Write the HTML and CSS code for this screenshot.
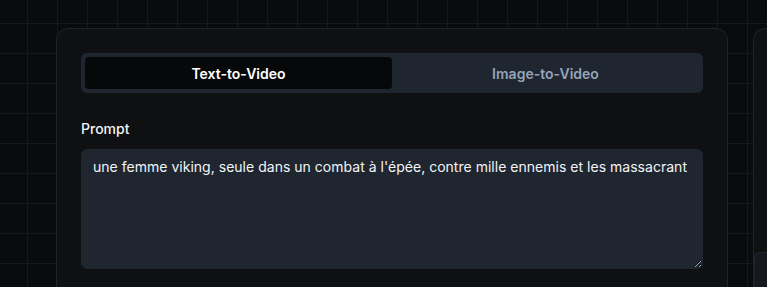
FILE: index.html
```html
<!DOCTYPE html>
<html lang="fr">
<head>
<meta charset="utf-8">
<title>Text-to-Video</title>
<link rel="stylesheet" href="styles.css">
</head>
<body>
<div class="page">
  <section class="card">
    <div class="tabs">
      <button class="tab active">Text-to-Video</button>
      <button class="tab">Image-to-Video</button>
    </div>
    <label class="label" for="prompt">Prompt</label>
    <textarea id="prompt" class="prompt">une femme viking, seule dans un combat à l'épée, contre mille ennemis et les massacrant</textarea>
  </section>
  <aside class="card side">
    <div class="side-box"></div>
  </aside>
</div>
</body>
</html>
```
FILE: styles.css
```css
* { box-sizing: border-box; }
html, body {
  margin: 0;
  height: 100%;
  overflow: hidden;
}
body {
  background-color: #0a0b0d;
  background-image:
    linear-gradient(to right, #15181d 1px, transparent 1px),
    linear-gradient(to bottom, #15181d 1px, transparent 1px);
  background-size: 30px 30px;
  background-position: 27px 23px;
  font-family: Inter, "Noto Sans", sans-serif;
  color: #f3f4f6;
}
.page {
  display: grid;
  grid-template-columns: 672px 1fr;
  gap: 25px;
  padding: 28px 0 0 56px;
  height: 100vh;
  overflow: hidden;
}
.card {
  background: #0f1012;
  border: 1px solid #1f242b;
  border-radius: 12px;
  padding: 24px;
  height: 320px;
  display: flex;
  flex-direction: column;
}
.tabs {
  display: flex;
  background: #1f2630;
  border-radius: 6px;
  padding: 4px;
  height: 40px;
}
.tab {
  flex: 1;
  border: 0;
  border-radius: 4px;
  background: transparent;
  font-family: inherit;
  font-size: 14px;
  font-weight: 600;
  letter-spacing: 0.01px;
  color: #94a3b8;
  cursor: pointer;
}
.tab.active {
  background: #07080a;
  color: #ffffff;
}
.label {
  margin-top: 26px;
  font-size: 14px;
  font-weight: 500;
  line-height: 20px;
  color: #f3f4f6;
}
.prompt {
  margin-top: 10px;
  height: 120px;
  resize: vertical;
  background: #1f2630;
  border: 1px solid #1f2630;
  border-radius: 6px;
  padding: 7px 11px;
  font-family: inherit;
  font-size: 14px;
  line-height: 20px;
  letter-spacing: 0.02px;
  color: #f3f4f6;
  outline: none;
}
.side {
  padding: 0;
  overflow: hidden;
  border-right: 0;
  border-radius: 12px 0 0 12px;
}
.side-box {
  margin: 223px 0 0 0;
  height: 80px;
  background: #15191f;
  border: 1px solid #1f242b;
  border-right: 0;
  border-radius: 6px 0 0 6px;
}
```
